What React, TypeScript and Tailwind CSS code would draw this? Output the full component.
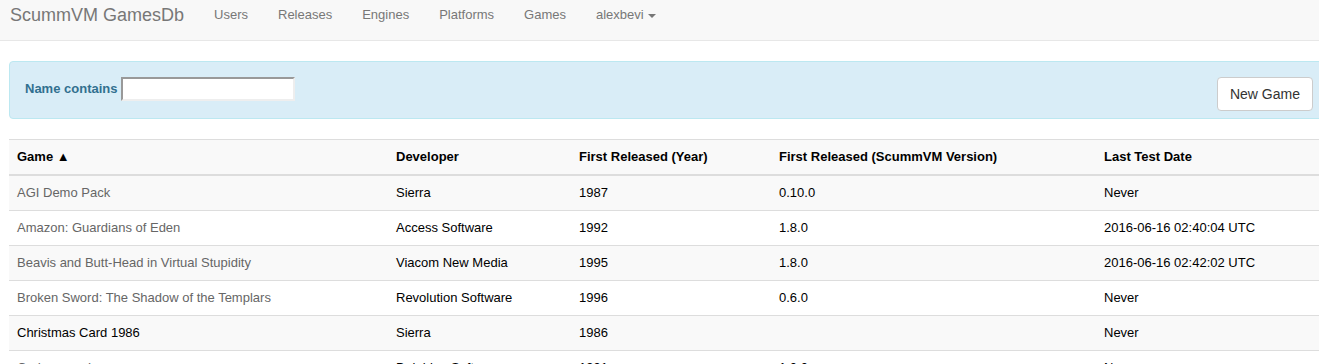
import React from 'react';

interface GameRow {
  name: string;
  developer: string;
  year: string;
  version: string;
  lastTest: string;
  linked: boolean;
}

const games: GameRow[] = [
  { name: 'AGI Demo Pack', developer: 'Sierra', year: '1987', version: '0.10.0', lastTest: 'Never', linked: true },
  { name: 'Amazon: Guardians of Eden', developer: 'Access Software', year: '1992', version: '1.8.0', lastTest: '2016-06-16 02:40:04 UTC', linked: true },
  { name: 'Beavis and Butt-Head in Virtual Stupidity', developer: 'Viacom New Media', year: '1995', version: '1.8.0', lastTest: '2016-06-16 02:42:02 UTC', linked: true },
  { name: 'Broken Sword: The Shadow of the Templars', developer: 'Revolution Software', year: '1996', version: '0.6.0', lastTest: 'Never', linked: true },
  { name: 'Christmas Card 1986', developer: 'Sierra', year: '1986', version: '', lastTest: 'Never', linked: false },
  { name: 'Codename: Iceman', developer: 'Delphine Software', year: '1991', version: '1.0.0', lastTest: 'Never', linked: true },
];

const navLinks = ['Users', 'Releases', 'Engines', 'Platforms', 'Games'];

export default function App() {
  return (
    <div className="w-[1319px] h-[364px] overflow-hidden bg-white text-[#333] font-['Liberation_Sans',Arial,sans-serif]">
      {/* navbar */}
      <div className="h-[41px] bg-[#f8f8f8] border-b border-[#e7e7e7] flex items-start pt-[5px] text-[#777]">
        <div className="pl-[10px] pr-[15px] text-[18px] leading-[20px]">ScummVM GamesDb</div>
        <div className="flex text-[13px] leading-[20px]">
          {navLinks.map((l) => (
            <div key={l} className="px-[15px]">{l}</div>
          ))}
          <div className="px-[15px] flex items-center">
            alexbevi
            <span className="ml-[4px] mt-[2px] w-0 h-0 border-l-[4px] border-r-[4px] border-t-[4px] border-l-transparent border-r-transparent border-t-[#777]"></span>
          </div>
        </div>
      </div>

      <div className="pl-[9px] w-[1335px]">
        {/* filter panel */}
        <div className="mt-[20px] h-[58px] bg-[#d9edf7] border border-[#bce8f1] rounded-[4px] flex items-start justify-between pl-[15px] pr-[21px] pt-[15px] text-[#31708f]">
          <div className="flex items-center text-[13px] font-bold">
            <span>Name contains</span>
            <input className="ml-[4px] w-[174px] h-[24px] bg-white border-2 border-t-[#999] border-l-[#999] border-r-[#eee] border-b-[#eee] outline-none" />
          </div>
          <button className="h-[34px] px-[12px] bg-white border border-[#ccc] rounded-[4px] text-[14px] text-[#333]">New Game</button>
        </div>

        {/* games table */}
        <table className="mt-[20px] w-[1310px] border-collapse text-[13px] leading-[18px]">
          <thead>
            <tr className="bg-[#f9f9f9] border-t border-[#ddd] border-b-2 text-left">
              <th className="w-[379px] px-[8px] py-[8px] font-bold text-black">Game ▲</th>
              <th className="w-[183px] px-[8px] py-[8px] font-bold text-black">Developer</th>
              <th className="w-[200px] px-[8px] py-[8px] font-bold text-black">First Released (Year)</th>
              <th className="w-[325px] px-[8px] py-[8px] font-bold text-black">First Released (ScummVM Version)</th>
              <th className="px-[8px] py-[8px] font-bold text-black">Last Test Date</th>
            </tr>
          </thead>
          <tbody>
            {games.map((g, i) => (
              <tr key={g.name} className={`border-t border-[#ddd] ${i % 2 === 0 ? 'bg-[#f9f9f9]' : 'bg-white'}`}>
                <td className={`px-[8px] py-[8px] ${g.linked ? 'text-[#666]' : 'text-black'}`}>{g.name}</td>
                <td className="px-[8px] py-[8px] text-black">{g.developer}</td>
                <td className="px-[8px] py-[8px] text-black">{g.year}</td>
                <td className="px-[8px] py-[8px] text-black">{g.version}</td>
                <td className="px-[8px] py-[8px] text-black">{g.lastTest}</td>
              </tr>
            ))}
          </tbody>
        </table>
      </div>
    </div>
  );
}
